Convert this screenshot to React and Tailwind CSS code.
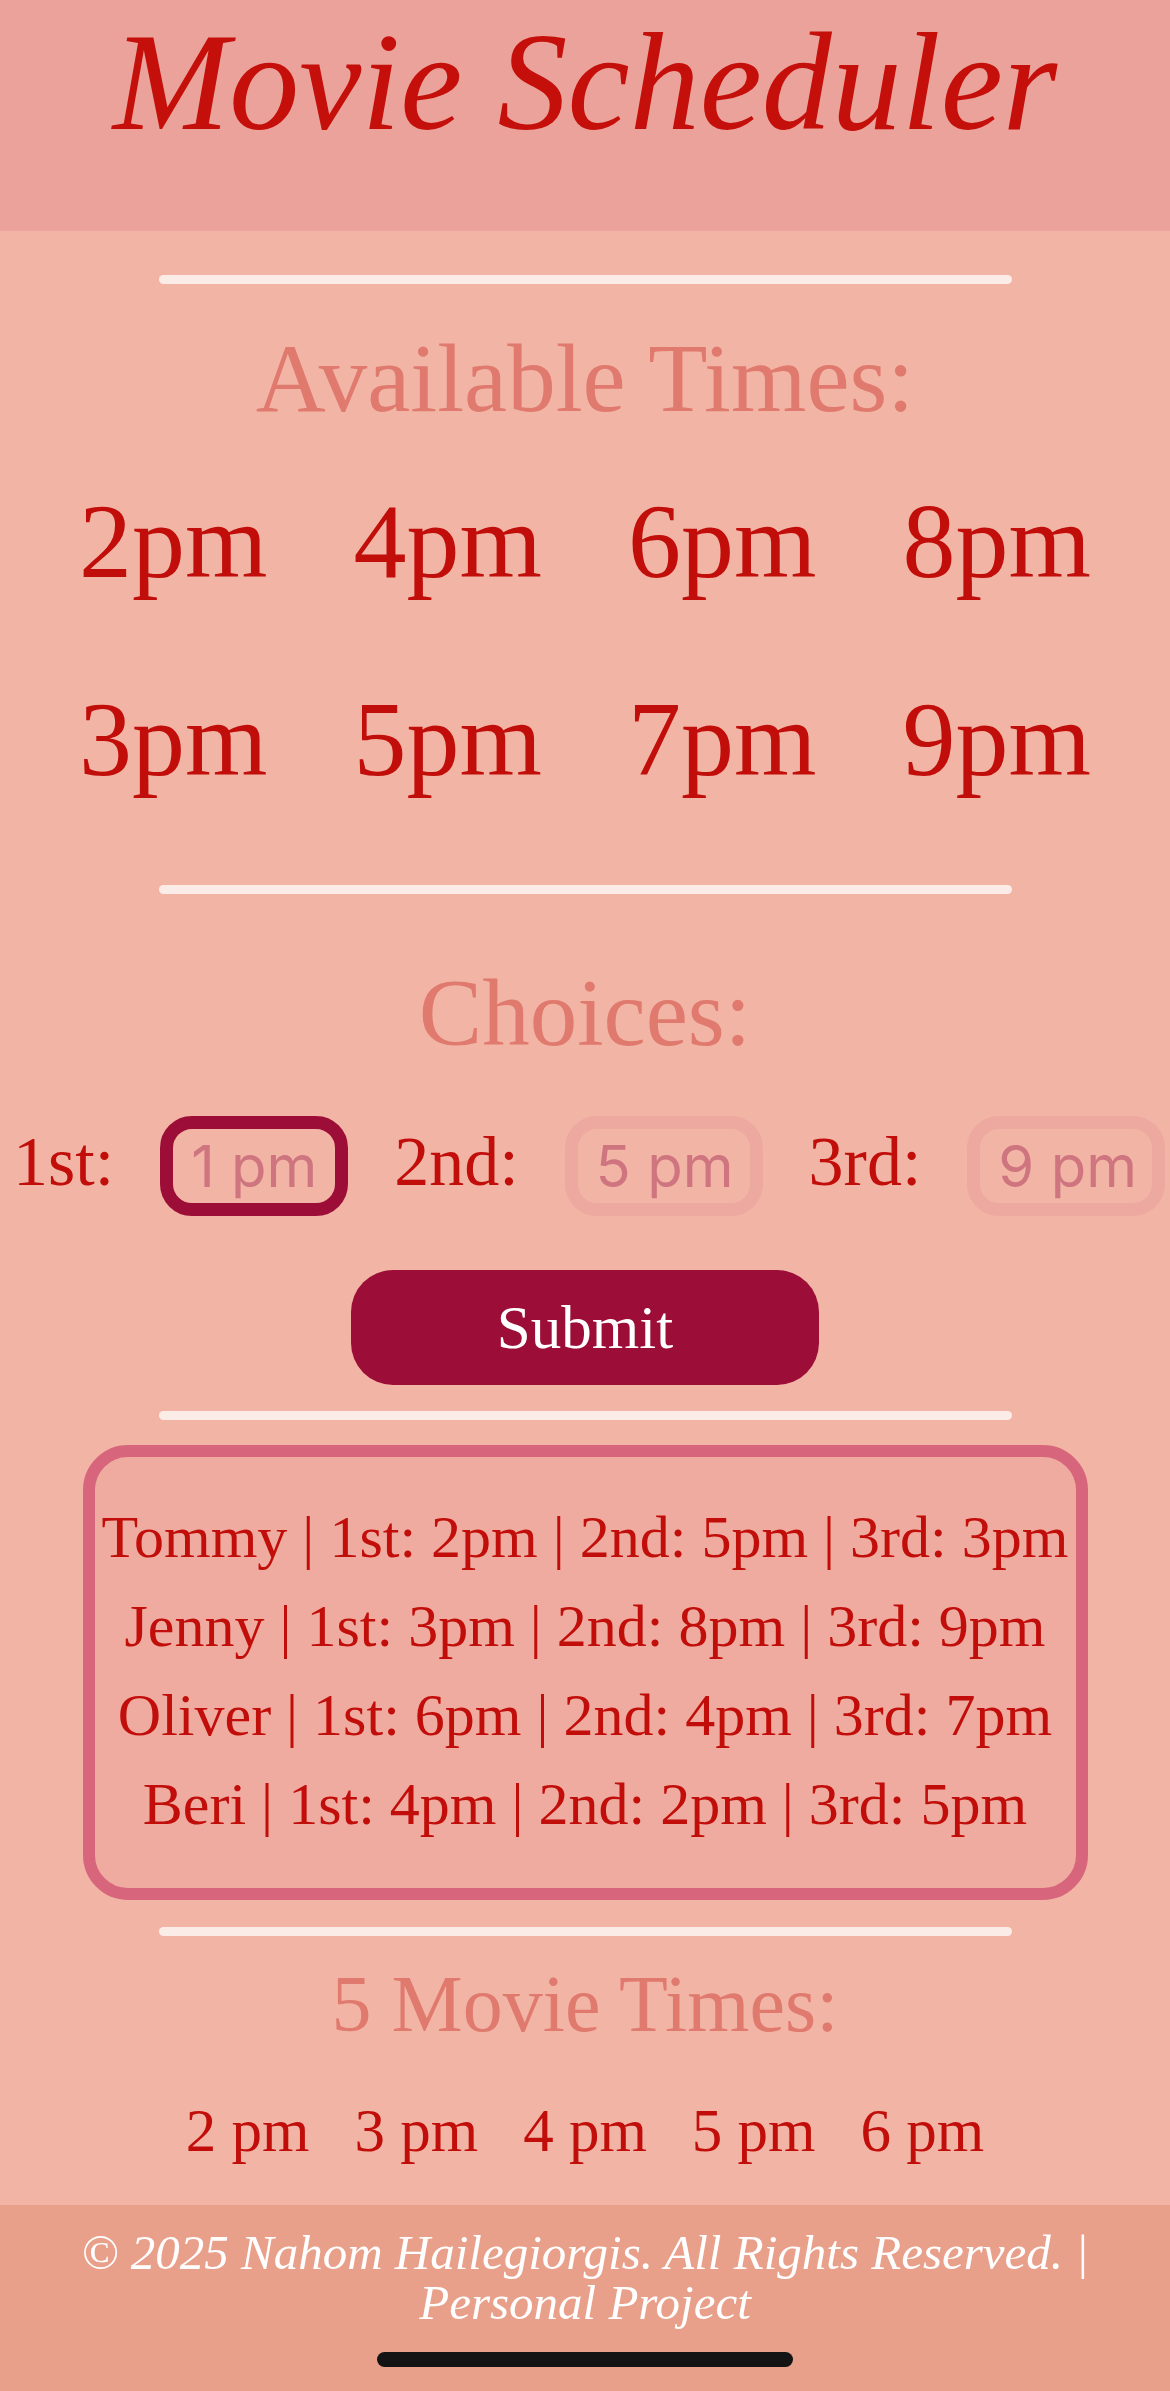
const availableTimes = ['2pm', '4pm', '6pm', '8pm', '3pm', '5pm', '7pm', '9pm']

const schedule = [
  'Tommy | 1st: 2pm | 2nd: 5pm | 3rd: 3pm',
  'Jenny | 1st: 3pm | 2nd: 8pm | 3rd: 9pm',
  'Oliver | 1st: 6pm | 2nd: 4pm | 3rd: 7pm',
  'Beri | 1st: 4pm | 2nd: 2pm | 3rd: 5pm'
]

const movieTimes = ['2 pm', '3 pm', '4 pm', '5 pm', '6 pm']

function Divider({ className = '' }) {
  return <div className={`w-[853px] h-[9px] mx-auto rounded-full bg-[#fcece7] ${className}`} />
}

function ChoiceInput({ placeholder, active }) {
  return (
    <input
      readOnly
      placeholder={placeholder}
      className={`shrink-0 h-[100px] rounded-[32px] border-[13px] bg-transparent pl-[18px] outline-none font-['Inter',sans-serif] text-[58px] placeholder:text-[#cf7580] ${
        active ? 'w-[188px] border-[#9c0e37]' : 'w-[198px] border-[#eda99f]'
      }`}
    />
  )
}

export default function App() {
  return (
    <div className="w-[1170px] min-h-[2391px] flex flex-col bg-[#f2b5a5] font-['Liberation_Serif',serif] overflow-hidden">
      <header className="h-[231px] bg-[#eaa29b] pt-[12px]">
        <h1 className="text-center italic text-[140px] leading-none text-[#c40f0a]">Movie Scheduler</h1>
      </header>

      <main className="flex flex-col">
        <Divider className="mt-[44px]" />

        <h2 className="mt-[46px] text-center text-[97px] leading-none text-[#e07a6f]">Available Times:</h2>

        <div className="mt-[62px] grid grid-cols-4 gap-y-[92px] px-[36px]">
          {availableTimes.map((time) => (
            <div key={time} className="text-center text-[106px] leading-none text-[#c10e0b]">
              {time}
            </div>
          ))}
        </div>

        <Divider className="mt-[92px]" />

        <h2 className="mt-[72px] text-center text-[95px] leading-none text-[#e07a6f]">Choices:</h2>

        <div className="mt-[55px] flex items-center gap-[46px] pl-[13px] w-full overflow-hidden">
          <span className="shrink-0 text-[70px] leading-none text-[#c10e0b] -mt-[8px]">1st:</span>
          <ChoiceInput placeholder="1 pm" active />
          <span className="shrink-0 text-[70px] leading-none text-[#c10e0b] -mt-[8px]">2nd:</span>
          <ChoiceInput placeholder="5 pm" />
          <span className="shrink-0 text-[70px] leading-none text-[#c10e0b] -mt-[8px]">3rd:</span>
          <ChoiceInput placeholder="9 pm" />
        </div>

        <button className="mt-[54px] mx-auto w-[468px] h-[115px] rounded-[42px] bg-[#9c0e37] text-white text-[61px] leading-none">
          Submit
        </button>

        <Divider className="mt-[26px]" />

        <div className="mt-[25px] mx-auto w-[1005px] h-[455px] rounded-[45px] border-[12px] border-[#d7667d] bg-[#efab9f] pt-[36px]">
          {schedule.map((row) => (
            <p key={row} className="text-center text-[60px] leading-[89px] text-[#c10e0b] whitespace-nowrap">
              {row}
            </p>
          ))}
        </div>

        <Divider className="mt-[27px]" />

        <h2 className="mt-[28px] text-center text-[80px] leading-none text-[#e07a6f]">5 Movie Times:</h2>

        <div className="mt-[56px] flex justify-center gap-[45px]">
          {movieTimes.map((time) => (
            <span key={time} className="text-[61px] leading-none text-[#c10e0b]">
              {time}
            </span>
          ))}
        </div>
      </main>

      <footer className="mt-[44px] h-[186px] bg-[#e8a08a] pt-[23px] flex flex-col items-center">
        <p className="text-center italic text-white text-[49px] leading-[50px]">
          <span className="block">© 2025 Nahom Hailegiorgis. All Rights Reserved. |</span>
          <span className="block">Personal Project</span>
        </p>
        <div className="mt-[24px] w-[416px] h-[15px] rounded-full bg-[#141414]" />
      </footer>
    </div>
  )
}
